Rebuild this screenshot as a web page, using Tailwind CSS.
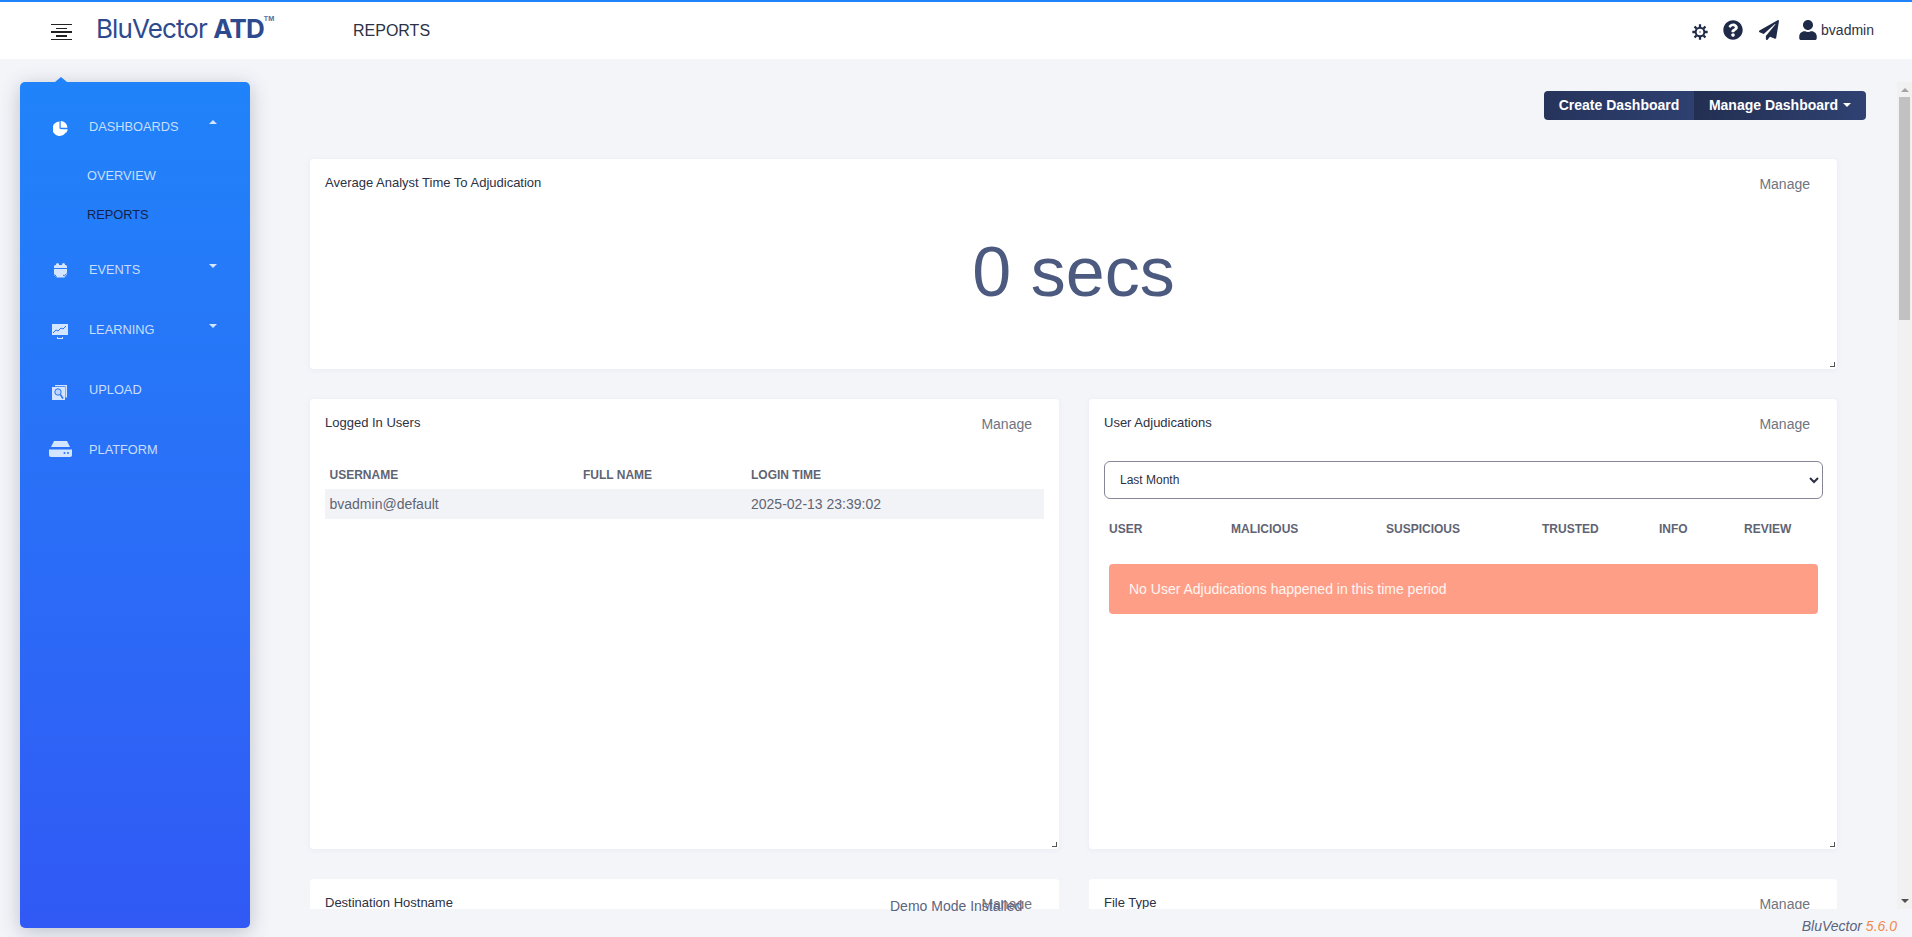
<!DOCTYPE html>
<html lang="en">
<head>
  <meta charset="UTF-8">
  <title>BluVector ATD - Reports</title>
  <script src="https://cdn.jsdelivr.net/npm/@tailwindcss/browser@4"></script>
</head>
<body class="h-[937px] w-[1912px] overflow-hidden bg-[#f4f5f9] font-['Liberation_Sans',Arial,sans-serif] text-[#2c3145]">

  <!-- top bar -->
  <header class="h-[59px] bg-white border-t-2 border-[#2083fa] flex items-center">
    <div class="ml-[51px] w-[21px] flex flex-col items-center gap-[2.25px] mt-[3px]">
      <span class="block h-[1.5px] w-[21px] bg-[#222]"></span>
      <span class="block h-[1.5px] w-[11px] bg-[#222]"></span>
      <span class="block h-[1.5px] w-[21px] bg-[#222]"></span>
      <span class="block h-[1.5px] w-[11px] bg-[#222]"></span>
      <span class="block h-[1.5px] w-[21px] bg-[#222]"></span>
    </div>
    <div class="ml-[24px] w-[257px] text-[#2d4a8f] text-[26px] leading-none tracking-[-0.9px] font-['Inter',sans-serif] -mt-[3px]">
      BluVector <span class="font-bold">ATD</span><sup class="text-[6.5px] font-bold align-[14px] tracking-normal text-[#5a6f9f]">TM</sup>
    </div>
    <div class="text-base text-[#2c3145]">REPORTS</div>
    <div class="ml-auto mr-[38px] flex items-center text-[#1f2a48]">
      <svg class="w-[16px] h-[16px] mt-[3px]" viewBox="0 0 24 24" fill="none" stroke="currentColor">
        <circle cx="12" cy="12" r="6.500" stroke-width="3"/>
        <circle cx="12" cy="12" r="1.500" fill="#9aa0ad" stroke="none"/>
        <path stroke-width="3.400" d="M12 0.500v4M12 19.500v4M0.500 12h4M19.500 12h4M3.800 3.800 6.600 6.600M17.400 17.400l2.800 2.800M3.800 20.200 6.600 17.400M17.400 6.600l2.800-2.800"/>
      </svg>
      <svg class="w-5 h-5 ml-[15px] -mt-[1px]" viewBox="0 0 512 512" fill="currentColor"><path d="M504 256c0 136.997-111.043 248-248 248S8 392.997 8 256C8 119.083 119.043 8 256 8s248 111.083 248 248zM262.655 90c-54.497 0-89.255 22.957-116.549 63.758-3.536 5.286-2.353 12.415 2.715 16.258l34.699 26.31c5.205 3.947 12.621 3.008 16.665-2.122 17.864-22.658 30.113-35.797 57.303-35.797 20.429 0 45.698 13.148 45.698 32.958 0 14.976-12.363 22.667-32.534 33.976C247.128 238.528 216 254.941 216 296v4c0 6.627 5.373 12 12 12h56c6.627 0 12-5.373 12-12v-1.333c0-28.462 83.186-29.647 83.186-106.667 0-58.002-60.165-102-116.531-102zM256 338c-25.365 0-46 20.635-46 46 0 25.364 20.635 46 46 46s46-20.636 46-46c0-25.365-20.635-46-46-46z"/></svg>
      <svg class="w-5 h-5 ml-[16px] -mt-[1px]" viewBox="0 0 512 512" fill="currentColor"><path d="M476 3.2L12.5 270.6c-18.1 10.4-15.8 35.6 2.2 43.2L121 358.4l287.3-253.2c5.5-4.9 13.3 2.6 8.6 8.3L176 407v80.5c0 23.6 28.5 32.9 42.5 15.8L282 426l124.6 52.2c14.2 6 30.4-2.9 33-18.2l72-432C515 7.8 493.3-6.8 476 3.2z"/></svg>
      <svg class="w-[18px] h-5 ml-[20px] -mt-[1px]" viewBox="0 0 448 512" fill="currentColor"><path d="M224 256c70.7 0 128-57.3 128-128S294.7 0 224 0 96 57.3 96 128s57.3 128 128 128zm89.6 32h-16.7c-22.2 10.2-46.9 16-72.9 16s-50.6-5.8-72.9-16h-16.7C60.2 288 0 348.2 0 422.4V464c0 26.500 21.5 48 48 48h352c26.500 0 48-21.5 48-48v-41.6c0-74.2-60.2-134.4-134.4-134.4z"/></svg>
      <span class="ml-[4px] text-sm text-[#2c3145] -mt-[1px]">bvadmin</span>
    </div>
  </header>

  <div class="flex h-[878px]">
    <!-- sidebar -->
    <div class="pl-5 pt-[23px]">
      <aside class="relative w-[230px] h-[846px] rounded-[5px] bg-gradient-to-b from-[#2083fa] to-[#3159f5] shadow-[0_4px_20px_rgba(60,70,100,0.3)] text-[12.8px] text-[#c8defc]">
        <span class="absolute -top-[5px] left-[35px] border-x-[6px] border-x-transparent border-b-[5px] border-b-[#2083fa]"></span>

        <nav class="pt-[37px]">
          <div class="h-[15px] flex items-center relative">
            <svg class="absolute left-[33px] top-[2px] w-[15px] h-[15px]" viewBox="0 0 15 15" fill="#fff"><path d="M6.500 0.600A7.200 7.200 0 1 0 13.600 9.500L7.500 8 6.500 7.500z"/><path d="M7.700 0v6.700h6.800A7 7 0 0 0 7.700 0z"/><path d="M8.500 8.300h6.200a7 7 0 0 1-1.500 3.500z"/></svg>
            <span class="ml-[69px]">DASHBOARDS</span>
            <span class="absolute left-[189px] top-[1px] border-x-[4px] border-x-transparent border-b-[4px] border-b-[#d4e6ff]"></span>
          </div>
          <div class="ml-[67px] mt-[34px] leading-[15px]">OVERVIEW</div>
          <div class="ml-[67px] mt-[24px] leading-[15px] text-[#14234d]">REPORTS</div>

          <div class="h-[15px] mt-[40px] flex items-center relative">
            <svg class="absolute left-[33px] top-[1px] w-[15px] h-[15px]" viewBox="0 0 15 15" fill="#d4e6ff"><path d="M1 3.500C1 2.500 2 2 3 2V1.500a1.500 1.500 0 0 1 3 0V2h3v-.5a1.500 1.500 0 0 1 3 0V2c1 0 2 .5 2 1.500V5H1z"/><path d="M1 6h13v5.500L11.500 14.500H4L1 12z"/><path d="M10 12l1.500 1 2-2.500M1.500 11.500l2 2" fill="none" stroke="#2a72f8" stroke-width="1"/></svg>
            <span class="ml-[69px]">EVENTS</span>
            <span class="absolute left-[189px] top-[2px] border-x-[4px] border-x-transparent border-t-[4px] border-t-[#d4e6ff]"></span>
          </div>

          <div class="h-[15px] mt-[45px] flex items-center relative">
            <svg class="absolute left-[32px] top-[1px] w-[16px] h-[17px]" viewBox="0 0 16 17" fill="#d4e6ff"><path d="M0 1h16v11H0z"/><path d="M5 14v2h6v-2h-1v1H6v-1z"/><path d="M1 10l3-3 2 1 3-3 2 1 3-3" fill="none" stroke="#2a72f8" stroke-width="1"/></svg>
            <span class="ml-[69px]">LEARNING</span>
            <span class="absolute left-[189px] top-[2px] border-x-[4px] border-x-transparent border-t-[4px] border-t-[#d4e6ff]"></span>
          </div>

          <div class="h-[15px] mt-[45px] flex items-center relative">
            <svg class="absolute left-[32px] top-[3px] w-[15px] h-[15px]" viewBox="0 0 15 15"><path d="M3 0h12v12.500h-1.500V1.200H3z" fill="#d4e6ff"/><path d="M0 2h13v13H0z" fill="#d4e6ff"/><circle cx="6" cy="7" r="3.200" fill="#bcd6ff" stroke="#2a72f8" stroke-width="1"/><path d="M8.300 9.500l2.700 4" stroke="#2a72f8" stroke-width="1.500"/></svg>
            <span class="ml-[69px]">UPLOAD</span>
          </div>

          <div class="h-[15px] mt-[45px] flex items-center relative">
            <svg class="absolute left-[29px] -top-[1px] w-[23px] h-[16px]" viewBox="0 0 23 16" fill="#d4e6ff"><path d="M5 0h13l3 6H2z"/><path d="M0 8.500h23V14a2 2 0 0 1-2 2H2a2 2 0 0 1-2-2z"/><circle cx="15.500" cy="12" r="1" fill="#2a72f8"/><circle cx="19" cy="12" r="1" fill="#2a72f8"/></svg>
            <span class="ml-[69px]">PLATFORM</span>
          </div>
        </nav>
      </aside>
    </div>

    <!-- main column -->
    <div class="flex-1 flex flex-col pt-[23px]">
      <div class="relative flex h-[827px]">
        <main class="flex-1 overflow-hidden pl-[60px] pr-[31px]">
          <div class="pt-[9px] flex justify-end h-[77px]">
            <div class="flex h-[29px] rounded-[4px] overflow-hidden text-sm font-bold text-white">
              <div class="w-[150px] pb-[1px] flex items-center justify-center bg-gradient-to-r from-[#26345c] to-[#2e4070]">Create Dashboard</div>
              <div class="w-[172px] pb-[1px] flex items-center justify-center gap-[5px] bg-gradient-to-r from-[#232f52] to-[#2f4272]">
                Manage Dashboard
                <span class="border-x-[4px] border-x-transparent border-t-[4px] border-t-white"></span>
              </div>
            </div>
          </div>

          <section class="relative w-[1527px] h-[210px] bg-white rounded-[4px] shadow-[0_1px_6px_rgba(120,130,160,0.08)]">
            <div class="flex justify-between pl-[15px] pr-[27px]">
              <h2 class="pt-[16px] text-[13px] leading-[15px]">Average Analyst Time To Adjudication</h2>
              <a class="pt-[15px] text-sm text-[#6f7480]">Manage</a>
            </div>
            <div class="text-center text-[70px] leading-[80px] mt-[38px] text-[#4d5a80]">0 secs</div>
            <span class="absolute right-[2px] bottom-[2px] w-[5px] h-[5px] border-r border-b border-[#555]"></span>
          </section>

          <div class="grid grid-cols-[749px_748px] gap-x-[30px] gap-y-[30px] mt-[30px]">
            <section class="relative h-[450px] bg-white rounded-[4px] shadow-[0_1px_6px_rgba(120,130,160,0.08)]">
              <div class="flex justify-between pl-[15px] pr-[27px]">
                <h2 class="pt-[16px] text-[13px] leading-[15px]">Logged In Users</h2>
                <a class="pt-[15px] text-sm text-[#6f7480]">Manage</a>
              </div>
              <table class="mt-[25px] ml-[15px] w-[719px] table-fixed text-left">
                <thead class="text-xs font-bold text-[#5f6474]">
                  <tr class="h-[30px]">
                    <th class="w-[253px] pl-[4.500px] pt-[2px]">USERNAME</th>
                    <th class="w-[168px] pl-[5px] pt-[2px]">FULL NAME</th>
                    <th class="pl-[5px] pt-[2px]">LOGIN TIME</th>
                  </tr>
                </thead>
                <tbody class="text-sm text-[#5f6474]">
                  <tr class="h-[30px] bg-[#f2f3f6]">
                    <td class="pl-[4.500px]">bvadmin@default</td>
                    <td class="pl-[5px]"></td>
                    <td class="pl-[5px]">2025-02-13 23:39:02</td>
                  </tr>
                </tbody>
              </table>
              <span class="absolute right-[2px] bottom-[2px] w-[5px] h-[5px] border-r border-b border-[#555]"></span>
            </section>

            <section class="relative h-[450px] bg-white rounded-[4px] shadow-[0_1px_6px_rgba(120,130,160,0.08)]">
              <div class="flex justify-between pl-[15px] pr-[27px]">
                <h2 class="pt-[16px] text-[13px] leading-[15px]">User Adjudications</h2>
                <a class="pt-[15px] text-sm text-[#6f7480]">Manage</a>
              </div>
              <select class="block mt-[27px] ml-[15px] w-[719px] h-[38px] pl-[11px] bg-white border border-[#858796] rounded-[6px] text-xs text-[#2c3145] appearance-auto">
                <option>Last Month</option>
              </select>
              <table class="mt-[15px] ml-[15px] w-[719px] table-fixed text-left">
                <thead class="text-xs font-bold text-[#5f6474]">
                  <tr class="h-[30px]">
                    <th class="w-[122px] pl-[5px]">USER</th>
                    <th class="w-[155px] pl-[5px]">MALICIOUS</th>
                    <th class="w-[156px] pl-[5px]">SUSPICIOUS</th>
                    <th class="w-[117px] pl-[5px]">TRUSTED</th>
                    <th class="w-[85px] pl-[5px]">INFO</th>
                    <th class="pl-[5px]">REVIEW</th>
                  </tr>
                </thead>
              </table>
              <div class="mt-[20px] ml-[20px] w-[709px] h-[50px] rounded-[4px] bg-[#ff9e87] text-sm text-[#fff6f2] pl-[20px] flex items-center">No User Adjudications happened in this time period</div>
              <span class="absolute right-[2px] bottom-[2px] w-[5px] h-[5px] border-r border-b border-[#555]"></span>
            </section>

            <section class="h-[450px] bg-white rounded-[4px]">
              <div class="flex justify-between pl-[15px] pr-[27px]">
                <h2 class="pt-[16px] text-[13px] leading-[15px]">Destination Hostname</h2>
                <a class="pt-[15px] text-sm text-[#6f7480]">Manage</a>
              </div>
            </section>
            <section class="h-[450px] bg-white rounded-[4px]">
              <div class="flex justify-between pl-[15px] pr-[27px]">
                <h2 class="pt-[16px] text-[13px] leading-[15px]">File Type</h2>
                <a class="pt-[15px] text-sm text-[#6f7480]">Manage</a>
              </div>
            </section>
          </div>
        </main>

        <!-- scrollbar -->
        <div class="w-[15px] bg-[#f1f1f1] flex flex-col items-center">
          <span class="mt-[6px] border-x-[4px] border-x-transparent border-b-[4px] border-b-[#a3a3a3]"></span>
          <div class="mt-[5px] w-[11px] h-[223px] bg-[#c1c1c1]"></div>
          <span class="mt-auto mb-[6px] border-x-[4px] border-x-transparent border-t-[4px] border-t-[#505050]"></span>
        </div>

        <div class="absolute left-[640px] bottom-[-7px] text-sm text-[#5b6480]">Demo Mode Installed</div>
      </div>

      <footer class="pt-[7px] pr-[15px] text-right text-sm italic text-[#5b6480]">BluVector <span class="text-[#f08a4b]">5.6.0</span></footer>
    </div>
  </div>

</body>
</html>
